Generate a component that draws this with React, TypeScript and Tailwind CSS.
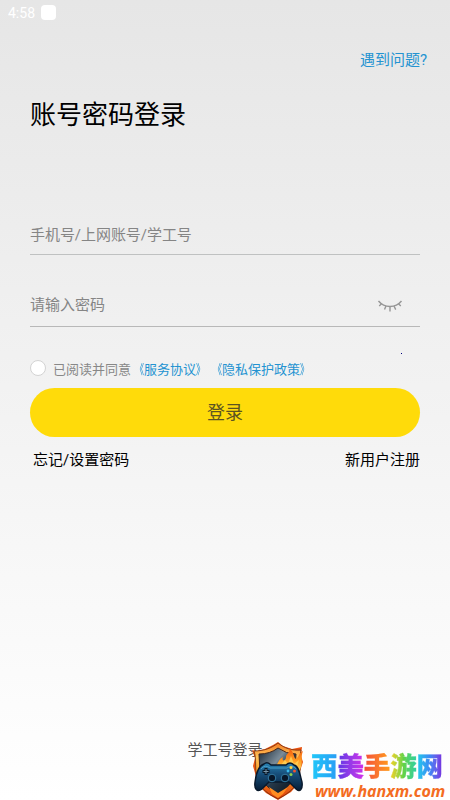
import { useState } from "react";

const ClosedEye = () => (
    <svg
        width="26"
        height="14"
        viewBox="0 0 26 14"
        fill="none"
        stroke="#979797"
        strokeWidth="1.4"
    >
        <path d="M1.5 2C7.5 9.3 18.5 9.3 24.5 2" />
        <path d="M4.7 4.6L2.2 6.9M9 7L7.5 10.6M13 7.6V12.6M17 7L18.7 10.6M21.3 4.6L23.8 6.9" />
    </svg>
);

const ShieldLogo = () => (
    <svg width="52" height="58" viewBox="0 0 52 58" fill="none">
        <defs>
            <linearGradient id="rim" x1="0" y1="0" x2="0" y2="1">
                <stop offset="0" stopColor="#f47b20" />
                <stop offset="0.25" stopColor="#ffc35a" />
                <stop offset="0.55" stopColor="#f4951f" />
                <stop offset="1" stopColor="#df3c0c" />
            </linearGradient>
            <linearGradient id="plate" x1="0" y1="0" x2="1" y2="1">
                <stop offset="0" stopColor="#132231" />
                <stop offset="0.38" stopColor="#7b8c99" />
                <stop offset="0.55" stopColor="#26394a" />
                <stop offset="1" stopColor="#090f17" />
            </linearGradient>
            <linearGradient id="flame" x1="0" y1="0" x2="0" y2="1">
                <stop offset="0" stopColor="#f1570f" />
                <stop offset="0.55" stopColor="#ff9c21" />
                <stop offset="1" stopColor="#ffd45d" />
            </linearGradient>
            <linearGradient id="pad" x1="0" y1="0" x2="0" y2="1">
                <stop offset="0" stopColor="#2984b5" />
                <stop offset="0.4" stopColor="#174e7a" />
                <stop offset="1" stopColor="#061d36" />
            </linearGradient>
        </defs>
        <path
            d="M26 0L31 4L40 7L50 5L49 14L51 20L48 29L46 42L39 50L26 58L14 51L6 43L3 31L1 24L3 16L0 8L4 9L13 7L21 3Z"
            fill="#e9530f"
        />
        <path
            d="M26 1C32 6 40 9 49 8C47 17 50 28 46 40Q40 50 26 57Q11 50 6 40C2 28 5 17 2 9C12 9 20 6 26 1Z"
            fill="url(#rim)"
            stroke="#5f2510"
            strokeWidth="0.7"
        />
        <path
            d="M26 6Q34 12 44 12L43 29Q41 44 26 52Q10 44 8 30L7 12Q18 12 26 6Z"
            fill="url(#plate)"
            stroke="#42261d"
        />
        <path
            d="M20 25C27 24 25 18 31 15C29 20 34 19 34 15C34 11 39 11 37 6C43 11 41 15 44 17C47 15 46 12 51 9C48 16 52 22 47 29H20Z"
            fill="url(#flame)"
        />
        <path
            d="M28 24L33 18L36 22L39 14L42 22L47 18L44 28H27Z"
            fill="#ffcb4f"
        />
        <g transform="translate(0 -1)">
            <path
                d="M12 23Q15 20 19 24H34Q38 20 42 24C47 25 48 34 50 41C51 48 48 52 44 48L37 41H17L10 48C5 52 2 48 3 41C4 33 6 25 12 23Z"
                fill="url(#pad)"
                stroke="#08182b"
                strokeWidth="1.4"
            />
            <path
                d="M9 28Q13 23 18 27H35Q40 23 44 28"
                stroke="#54a9cf"
                strokeWidth="0.8"
            />
            <path d="M14 27V34M10.5 30.5H17.5" stroke="#071626" strokeWidth="3" />
            <path d="M14 28V33M11.5 30.5H16.5" stroke="#7894a7" />
            <circle cx="20" cy="37" r="3.8" fill="#07172a" stroke="#337ba4" />
            <circle cx="33" cy="37" r="3.8" fill="#07172a" stroke="#337ba4" />
            <circle cx="39" cy="26.5" r="1.5" fill="#ffd43d" />
            <circle cx="36" cy="30" r="1.4" fill="#39b9ec" />
            <circle cx="42.5" cy="30" r="1.5" fill="#f2522c" />
            <circle cx="39" cy="33.5" r="1.5" fill="#8ed34d" />
        </g>
        <path
            d="M17 45L26 51L36 45L31 52L26 56L20 52Z"
            fill="#ff8d22"
        />
    </svg>
);

const brand = [
    { char: "西", color: "from-[#20c8f8] to-[#299df5]" },
    { char: "美", color: "from-[#5b35e5] to-[#d12bea]" },
    { char: "手", color: "from-[#f34a38] to-[#ff9b16]" },
    { char: "游", color: "from-[#f3cf20] via-[#62d346] to-[#26cfa2]" },
    { char: "网", color: "from-[#20cce9] via-[#3c85f5] to-[#7620dd]" },
];

const Watermark = () => (
    <div className="absolute left-[252px] top-[742px] flex">
        <ShieldLogo />
        <div className="ml-[7px] mt-[9px] flex flex-col">
            <div className="flex text-[26.4px] leading-[32px] font-black">
                {brand.map(({ char, color }) => (
                    <span
                        key={char}
                        className={`bg-linear-to-r bg-clip-text text-transparent [-webkit-text-stroke:0.3px_transparent] ${color}`}
                    >
                        {char}
                    </span>
                ))}
            </div>
            <span className="ml-1 font-['Open_Sans',sans-serif] text-[16px] leading-[17px] font-bold italic text-[#f46c22]">
                www.hanxm.com
            </span>
        </div>
    </div>
);

// policy link with narrow book-title brackets
const PolicyLink = ({ title }: { title: string }) => (
    <a className="flex text-[#2493d1]">
        <span className="origin-right scale-x-70">《</span>
        {title}
        <span className="origin-left scale-x-70">》</span>
    </a>
);

const App = () => {
    const [agreed, setAgreed] = useState(false);
    const [showPassword, setShowPassword] = useState(false);

    return (
        <div
            lang="zh-CN"
            className="relative flex h-[800px] w-[450px] flex-col overflow-hidden bg-linear-to-b from-[#e6e6e6] to-white font-[Roboto,'Noto_Sans_CJK_SC',sans-serif] text-black"
        >
            <header className="flex h-[26px] items-center gap-[6px] pl-2 text-[14px] text-white">
                <span>4:58</span>
                <span className="mb-px size-[15px] rounded-[4px] bg-white" />
            </header>
            <a className="mt-[23px] mr-[23px] self-end text-[15px] leading-[22px] text-[#2493d1]">
                遇到问题?
            </a>
            <h1 className="mt-[25px] ml-[30px] text-[26px] leading-[38px]">
                账号密码登录
            </h1>
            <form
                className="mt-[81px] flex flex-col px-[30px]"
                onSubmit={(e) => e.preventDefault()}
            >
                <input
                    type="text"
                    className="h-[40px] border-b border-[#bfc1c1] text-[15px] tracking-[-0.05px] outline-none placeholder:text-[#858585]"
                    placeholder="手机号/上网账号/学工号"
                />
                <div className="mt-[30px] flex h-[42px] items-center border-b border-[#b8b8b8] pr-[17px]">
                    <input
                        type={showPassword ? "text" : "password"}
                        className="min-w-0 flex-1 text-[15px] outline-none placeholder:text-[#858585]"
                        placeholder="请输入密码"
                    />
                    <button
                        type="button"
                        onClick={() => setShowPassword(!showPassword)}
                    >
                        <ClosedEye />
                    </button>
                </div>
                <div className="flex h-[61px] items-end pb-[9px] text-[13px] leading-[19px]">
                    <button
                        type="button"
                        className={`mb-[3px] mr-[7px] size-4 rounded-full border border-[#d3d3d3] ${agreed ? "bg-[#ffdb0a]" : "bg-white"}`}
                        onClick={() => setAgreed(!agreed)}
                    />
                    <span className="text-[#888888]">已阅读并同意</span>
                    <PolicyLink title="服务协议" />
                    <PolicyLink title="隐私保护政策" />
                </div>
                <button
                    type="submit"
                    className="h-[49px] rounded-full bg-[#ffdb0a] text-[18px] text-[#5c5322]"
                >
                    登录
                </button>
                <div className="mt-[12px] flex justify-between pl-[3px] text-[15px] leading-[22px]">
                    <a>忘记/设置密码</a>
                    <a>新用户注册</a>
                </div>
            </form>
            <a className="mt-auto mb-[39px] self-center text-[15px] leading-[22px] text-[#555555]">
                学工号登录
            </a>
            <span className="absolute left-[401px] top-[353px] size-px bg-[#00007c]" />
            <Watermark />
        </div>
    );
};

export default App;
